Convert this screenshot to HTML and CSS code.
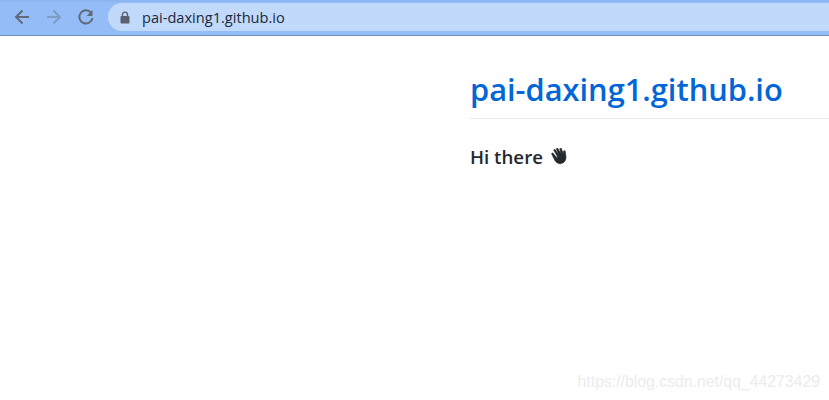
FILE: index.html
```html
<!DOCTYPE html>
<html lang="en">
<head>
    <meta charset="UTF-8">
    <title>pai-daxing1.github.io</title>
    <link rel="stylesheet" href="styles.css">
</head>
<body>
    <div class="toolbar">
        <div class="nav">
            <svg width="18" height="18" viewBox="0 0 18 18"><path d="M16 9H3.500M9.500 2.500L3 9l6.500 6.500" fill="none" stroke="#5f6b7c" stroke-width="2"/></svg>
            <svg width="18" height="18" viewBox="0 0 18 18"><path d="M2 9h12.500M8.500 2.500L15 9l-6.500 6.500" fill="none" stroke="#7f9cc4" stroke-width="2"/></svg>
            <svg width="18" height="18" viewBox="0 0 18 18"><path d="M14 4.600A6.600 6.600 0 1 0 15.500 10" fill="none" stroke="#5f6b7c" stroke-width="2"/><path d="M15.500 2v6h-6z" fill="#5f6b7c"/></svg>
        </div>
        <div class="address">
            <svg class="lock" width="10" height="13" viewBox="0 0 10 13"><path d="M2.500 5.500V3.600a2.500 2.500 0 0 1 5 0v1.900" fill="none" stroke="#5a6270" stroke-width="1.400"/><rect x="0.500" y="5" width="9" height="7.500" rx="1" fill="#5a6270"/></svg>
            <span class="url">pai-daxing1.github.io</span>
        </div>
    </div>

    <div class="page">
        <h1 class="title">pai-daxing1.github.io</h1>
        <p class="intro">Hi there
            <svg class="wave" width="19" height="18" viewBox="0 0 17 17"><path d="M2 4.500l5 6-1-3.500-3-5 1.200-.8 3.600 5-2.300-5.500 1.300-.6 3 5.500-1-5 1.400-.3 2 5.500.2-3 1.400-.2.700 4.700c.6 3.400-.8 6.200-3.700 7.200-2.500.8-4.700-.1-6.200-2L1 5.500z" fill="#24292e" stroke="#24292e" stroke-width=".6"/></svg>
        </p>
    </div>

    <div class="watermark">https://blog.csdn.net/qq_44273429</div>
</body>
</html>
```

FILE: styles.css
```css
body {
    margin: 0;
    background-color: #fff;
    overflow: hidden;
}

.toolbar {
    height: 36px;
    box-sizing: border-box;
    background-color: #94bdf8;
    border-top: 2px solid #8db5f2;
    border-bottom: 1px solid #6f8fbf;
    padding: 0 0 3px 13px;
    display: flex;
    align-items: center;
    gap: 13px;
}

.nav {
    display: flex;
    align-items: center;
    gap: 14px;
}

.address {
    flex: 1;
    height: 28px;
    background-color: #c1d9fb;
    border-radius: 14px 0 0 14px;
    display: flex;
    align-items: center;
    padding-left: 12px;
    gap: 12px;
}

.url {
    font-family: "Open Sans", sans-serif;
    font-size: 14.600px;
    color: #202a3a;
}

.page {
    padding: 32px 0 0 470px;
}

.title {
    margin: 0;
    padding-bottom: 8px;
    font-family: "Open Sans", sans-serif;
    font-size: 30.800px;
    font-weight: 600;
    line-height: 42px;
    color: #0366d6;
    border-bottom: 1px solid #eaecef;
    white-space: nowrap;
}

.intro {
    margin: 24px 0 0;
    font-family: "Open Sans", sans-serif;
    font-size: 18.700px;
    font-weight: 600;
    line-height: 28px;
    color: #24292e;
    display: flex;
    align-items: center;
    gap: 7px;
}

.watermark {
    position: absolute;
    right: 9px;
    bottom: 9px;
    font-family: "Liberation Sans", sans-serif;
    font-size: 15.800px;
    color: #ececec;
}
```
